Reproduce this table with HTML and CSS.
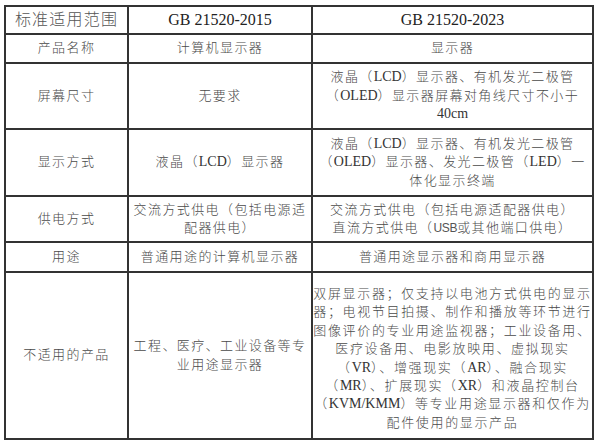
FILE: index.html
```html
<!DOCTYPE html>
<html lang="zh-CN">
<head>
<meta charset="utf-8">
<title>标准适用范围</title>
<link rel="stylesheet" href="styles.css">
</head>
<body>
<table class="cmp">
  <colgroup>
    <col class="c1">
    <col class="c2">
    <col class="c3">
  </colgroup>
  <tr class="r-head">
    <th class="label-head">标准适用范围</th>
    <th class="std">GB 21520-2015</th>
    <th class="std">GB 21520-2023</th>
  </tr>
  <tr class="r-name">
    <td>产品名称</td>
    <td>计算机显示器</td>
    <td>显示器</td>
  </tr>
  <tr class="r-size">
    <td>屏幕尺寸</td>
    <td>无要求</td>
    <td>液晶（<span class="en">LCD</span>）显示器、有机发光二极管<br>（<span class="en">OLED</span>）显示器屏幕对角线尺寸不小于<br><span class="en">40cm</span></td>
  </tr>
  <tr class="r-mode">
    <td>显示方式</td>
    <td>液晶（<span class="en">LCD</span>）显示器</td>
    <td>液晶（<span class="en">LCD</span>）显示器、有机发光二极管<br>（<span class="en">OLED</span>）显示器、发光二极管（<span class="en">LED</span>）一<br>体化显示终端</td>
  </tr>
  <tr class="r-power">
    <td>供电方式</td>
    <td>交流方式供电（包括电源适<br>配器供电）</td>
    <td>交流方式供电（包括电源适配器供电）<br>直流方式供电（<span class="en sans">USB</span>或其他端口供电）</td>
  </tr>
  <tr class="r-use">
    <td>用途</td>
    <td>普通用途的计算机显示器</td>
    <td>普通用途显示器和商用显示器</td>
  </tr>
  <tr class="r-excl">
    <td>不适用的产品</td>
    <td>工程、医疗、工业设备等专<br>业用途显示器</td>
    <td class="long">双屏显示器；仅支持以电池方式供电的显示<br>器；电视节目拍摄、制作和播放等环节进行<br>图像评价的专业用途监视器；工业设备用、<br>医疗设备用、电影放映用、虚拟现实<br>（<span class="en">VR</span>）、增强现实（<span class="en">AR</span>）、融合现实<br>（<span class="en">MR</span>）、扩展现实（<span class="en">XR</span>）和液晶控制台<br>（<span class="en">KVM/KMM</span>）等专业用途显示器和仅作为<br>配件使用的显示产品</td>
  </tr>
</table>
</body>
</html>
```

FILE: styles.css
```css
html, body {
  margin: 0;
  padding: 0;
  background: #ffffff;
}

body {
  font-family: "Liberation Serif", "Noto Sans CJK SC", serif;
  color: #4a4a4a;
}

.cmp {
  margin: 5px 0 0 4px;
  width: 590px;
  table-layout: fixed;
  border-collapse: separate;
  border-spacing: 0;
  border-top: 2px solid #333333;
  border-left: 2px solid #333333;
}

.c1 { width: 123px; }
.c2 { width: 184px; }
.c3 { width: 281px; }

.cmp th,
.cmp td {
  box-sizing: border-box;
  border-right: 2px solid #333333;
  border-bottom: 2px solid #333333;
  padding: 0;
  text-align: center;
  vertical-align: middle;
  white-space: nowrap;
  overflow: visible;
  font-weight: 300;
  font-size: 13px;
  line-height: 18.4px;
  letter-spacing: 1.4px;
}

.cmp th {
  font-size: 16px;
  color: #333333;
}

.cmp th.label-head {
  letter-spacing: 1.2px;
  color: #555555;
}

.cmp th.std {
  font-weight: 400;
  letter-spacing: 0;
  color: #222222;
}

.en {
  letter-spacing: 0;
  font-size: 14px;
  color: #333333;
  font-weight: 400;
}

.en.sans {
  font-family: "Liberation Sans", sans-serif;
  font-size: 12px;
  letter-spacing: -0.3px;
  color: #555555;
}

.r-head { height: 28px; }
.r-name { height: 29px; }
.r-size { height: 66px; }
.r-mode { height: 67px; }
.r-power { height: 46px; }
.r-use { height: 30px; }
.r-excl { height: 167px; }

.cmp td.long {
  letter-spacing: 1.65px;
  padding-top: 6px;
}

.cmp td.long .en {
  letter-spacing: 0;
}
```
